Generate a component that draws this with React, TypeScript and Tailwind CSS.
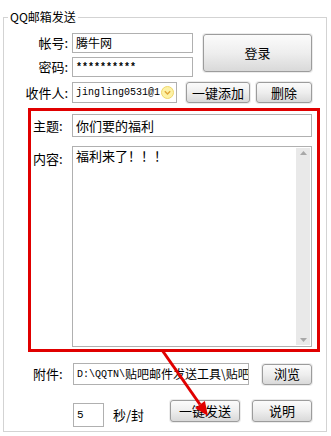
import React from 'react';

const cjk = { fontFamily: '"Noto Sans CJK SC", "Noto Sans", sans-serif' };
const mono = { fontFamily: '"Liberation Mono", "Noto Sans CJK SC", monospace' };

function Btn({ children, className }: { children: React.ReactNode; className: string }) {
  return (
    <div
      className={`flex items-center justify-center rounded-[3px] border border-[#9c9c9c] bg-linear-to-b from-[#fbfbfb] via-[#eeeeee] to-[#d9d9d9] text-[13px] text-black shadow-[0_0_0_1px_#ececec] ${className}`}
    >
      {children}
    </div>
  );
}

function Label({ children, className }: { children: React.ReactNode; className: string }) {
  return <div className={`text-[13px] leading-[16px] text-black ${className}`}>{children}</div>;
}

export default function App() {
  return (
    <div className="relative h-[436px] w-[331px] bg-white pl-[3px] pt-[10px]" style={cjk}>
      <fieldset className="h-[422px] w-[324px] border border-[#d3d3d3]">
        <legend className="ml-[4px] px-[2px] text-[12px] leading-[14px] text-black">QQ邮箱发送</legend>

        {/* account + login */}
        <div className="mt-[9px] flex items-start">
          <div className="flex flex-col gap-[4px]">
            <div className="flex items-center">
              <Label className="w-[64px] text-right">帐号:</Label>
              <div className="ml-[4px] flex h-[20px] w-[121px] items-center border border-[#b0b0b0] pl-[3px] text-[12px]">腾牛网</div>
            </div>
            <div className="flex items-center">
              <Label className="w-[64px] text-right">密码:</Label>
              <div className="ml-[4px] flex h-[20px] w-[121px] items-center border border-[#b0b0b0] pl-[3px] text-[10px] font-bold" style={mono}>**********</div>
            </div>
          </div>
          <Btn className="ml-[10px] mt-[1px] h-[38px] w-[109px]">登录</Btn>
        </div>

        {/* recipient */}
        <div className="mt-[5px] flex items-center">
          <Label className="w-[64px] text-right">收件人:</Label>
          <div className="ml-[4px] flex h-[21px] w-[105px] items-center overflow-hidden border border-[#b0b0b0] pl-[3px]">
            <span className="w-[84px] shrink-0 overflow-hidden whitespace-nowrap text-[10px]" style={mono}>jingling0531@1</span>
            <svg width="13" height="13" viewBox="0 0 13 13" className="ml-[1px] shrink-0">
              <circle cx="6.5" cy="6.5" r="6" fill="#fdf2a6" stroke="#efd66a" />
              <path d="M3.8 5.3 L6.5 8 L9.2 5.3" fill="none" stroke="#e0a638" strokeWidth="1.4" />
            </svg>
          </div>
          <Btn className="ml-[9px] h-[21px] w-[64px]">一键添加</Btn>
          <Btn className="ml-[6px] h-[21px] w-[56px]">删除</Btn>
        </div>

        {/* highlighted box */}
        <div className="ml-[24px] mt-[5px] h-[244px] w-[292px] border-[3px] border-[#e00000]">
          <div className="mt-[3px] flex items-center">
            <Label className="w-[41px] pl-[2px]">主题:</Label>
            <div className="flex h-[23px] w-[240px] items-center border border-[#b0b0b0] pl-[3px] text-[13px]">你们要的福利</div>
          </div>
          <div className="mt-[9px] flex items-start">
            <Label className="w-[41px] pl-[2px] pt-[5px]">内容:</Label>
            <div className="flex h-[201px] w-[240px] border border-[#b0b0b0]">
              <div className="flex-1 pl-[3px] pt-[1px] text-[13px] leading-[16px]">福利来了！！！</div>
              <div className="my-[1px] mr-[1px] flex w-[14px] flex-col items-center justify-between bg-[#e9e9e9] py-[3px]">
                <svg width="7" height="4" viewBox="0 0 7 4"><path d="M0 4 L3.5 0 L7 4 Z" fill="#a8a8a8" /></svg>
                <svg width="7" height="4" viewBox="0 0 7 4"><path d="M0 0 L3.5 4 L7 0 Z" fill="#a8a8a8" /></svg>
              </div>
            </div>
          </div>
        </div>

        {/* attachment */}
        <div className="mt-[11px] flex items-center">
          <Label className="ml-[29px] w-[40px]">附件:</Label>
          <div className="flex h-[22px] w-[176px] items-center overflow-hidden whitespace-nowrap border border-[#b0b0b0] pl-[3px]">
            <span className="text-[10px]" style={mono}>D:\QQTN\</span>
            <span className="text-[12px]">贴吧邮件发送工具\贴吧</span>
          </div>
          <Btn className="ml-[13px] h-[21px] w-[50px]">浏览</Btn>
        </div>

        {/* send */}
        <div className="mt-[15px] flex items-start">
          <div className="ml-[69px] mt-[3px] flex h-[24px] w-[31px] items-center border border-[#b0b0b0] pl-[3px] text-[11px]" style={mono}>5</div>
          <Label className="ml-[9px] mt-[7px] w-[48px]">秒/封</Label>
          <Btn className="ml-[9px] h-[22px] w-[70px]">一键发送</Btn>
          <Btn className="ml-[12px] h-[22px] w-[60px]">说明</Btn>
        </div>
      </fieldset>

      <svg className="pointer-events-none absolute left-0 top-0" width="331" height="436">
        <line x1="162" y1="350" x2="200" y2="404.5" stroke="#e00000" strokeWidth="3" />
        <path d="M208 416 L195.1 407.9 L204.9 401.1 Z" fill="#e00000" />
      </svg>
    </div>
  );
}
